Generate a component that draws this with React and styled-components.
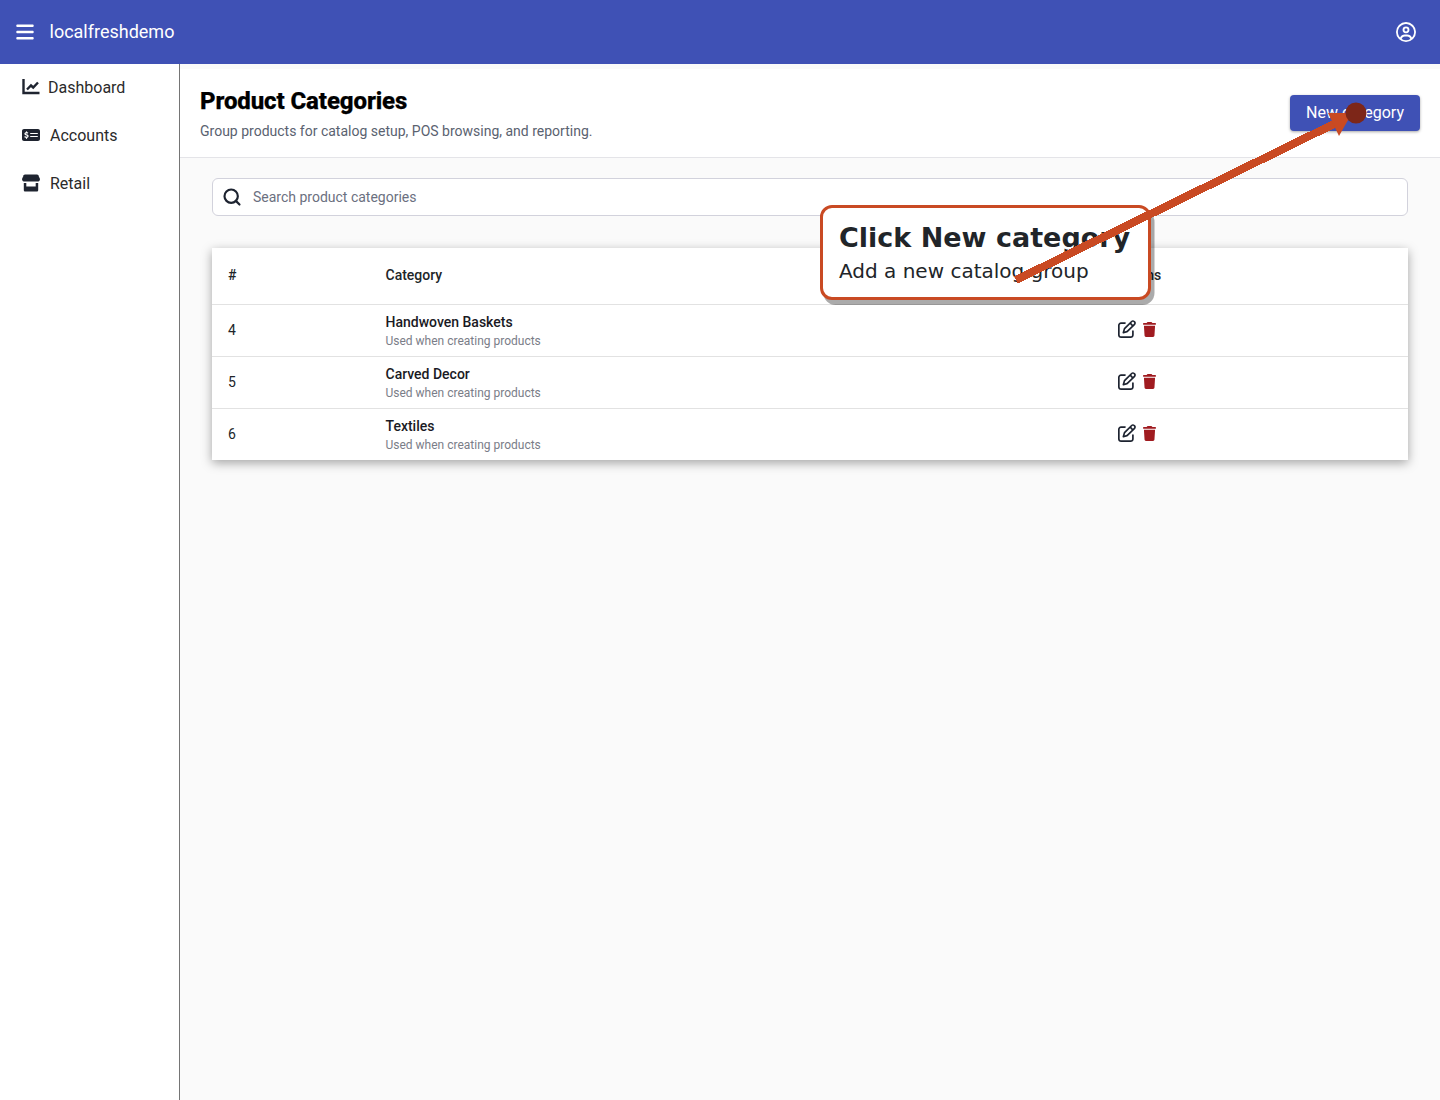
import React from 'react';
import styled, { createGlobalStyle } from 'styled-components';
import { FaBars, FaMoneyCheckDollar, FaRegCircleUser, FaRegPenToSquare, FaTrash } from 'react-icons/fa6';
import { Search } from 'lucide-react';

const GlobalStyle = createGlobalStyle`
  html, body {
    margin: 0;
    padding: 0;
    background: #fafafa;
    font-family: Roboto, "Liberation Sans", sans-serif;
    color: #212529;
  }
  * {
    box-sizing: border-box;
  }
`;

const Page = styled.div`
  position: relative;
  width: 1440px;
  height: 1100px;
  overflow: hidden;
  display: flex;
  flex-direction: column;
`;

const TopBar = styled.header`
  height: 64px;
  flex: none;
  background: #3f51b5;
  color: #fff;
  display: flex;
  align-items: center;
  padding: 0 24px 0 16px;
`;

const MenuButton = styled(FaBars)`
  width: 18px;
  height: 20px;
  margin-right: 15.5px;
`;

const Brand = styled.div`
  font-size: 18px;
  flex: 1;
  padding-bottom: 2px;
`;

const UserIcon = styled(FaRegCircleUser)`
  width: 20px;
  height: 20px;
`;

const Body = styled.div`
  flex: 1;
  display: flex;
  min-height: 0;
`;

const Sidebar = styled.nav`
  width: 180px;
  flex: none;
  background: #fff;
  border-right: 1px solid #757575;
`;

const NavItem = styled.div`
  height: 48px;
  display: flex;
  align-items: center;
  gap: ${(p) => p.$gap}px;
  padding: 0 0 2px 22px;
  font-size: 16px;
  color: #2b2b2b;
  svg {
    flex: none;
    width: 18px;
    height: 18px;
    color: #1f2430;
  }
`;

const Main = styled.main`
  flex: 1;
  min-width: 0;
  padding-top: 5px;
`;

const PageHeader = styled.div`
  height: 89px;
  background: #fff;
  border-bottom: 1px solid #e4e4e8;
  display: flex;
  justify-content: space-between;
  padding: 17px 20px 0;
`;

const Title = styled.h1`
  margin: 0;
  font-size: 24px;
  line-height: 30px;
  font-weight: 800;
  color: #000;
  letter-spacing: -0.1px;
  -webkit-text-stroke: 0.25px #000;
`;

const Subtitle = styled.p`
  margin: 5px 0 0;
  font-size: 14px;
  line-height: 20px;
  color: #5a6270;
`;

const PrimaryButton = styled.button`
  width: 130px;
  height: 36px;
  margin-top: 9px;
  padding: 0 0 2px;
  border: 0;
  border-radius: 4px;
  background: #3f51b5;
  color: #fff;
  font: 16px Roboto, sans-serif;
  box-shadow: 0 1px 3px rgba(0, 0, 0, 0.35);
`;

const Content = styled.div`
  padding: 20px 32px;
`;

const SearchBox = styled.div`
  height: 38px;
  display: flex;
  align-items: center;
  gap: 11px;
  padding-left: 9px;
  background: #fff;
  border: 1px solid #d2d2dc;
  border-radius: 6px;
  svg {
    width: 20px;
    height: 20px;
    color: #1d2330;
  }
`;

const SearchInput = styled.input`
  flex: 1;
  border: 0;
  outline: 0;
  padding: 0;
  background: transparent;
  font: 14px Roboto, sans-serif;
  &::placeholder {
    color: #6b7080;
    opacity: 1;
  }
`;

const Card = styled.section`
  margin-top: 32px;
  background: #fff;
  box-shadow: 0 3px 10px rgba(0, 0, 0, 0.35);
`;

const Row = styled.div`
  display: grid;
  grid-template-columns: 157.5px 728px 1fr;
  align-items: center;
  height: ${(p) => (p.$head ? 57 : p.$last ? 51 : 52)}px;
  padding: 0 0 2px 16px;
  font-size: 14px;
  border-bottom: ${(p) => (p.$last ? 0 : '1px solid #e2e2e2')};
  font-weight: ${(p) => (p.$head ? 500 : 400)};
  color: #212529;
`;

const CategoryCell = styled.div`
  margin-top: 2px;
`;

const Name = styled.div`
  font-weight: 500;
  line-height: 18px;
  color: #1a1a24;
`;

const Hint = styled.div`
  font-size: 12px;
  line-height: 16px;
  margin-top: 2px;
  color: #7a7d88;
`;

const Actions = styled.div`
  display: flex;
  align-items: center;
  gap: 7px;
  padding-left: 4.5px;
`;

const EditIcon = styled(FaRegPenToSquare)`
  width: 18px;
  height: 18px;
  margin-bottom: 2px;
  color: #1d2330;
`;

const TrashIcon = styled(FaTrash)`
  width: 13px;
  height: 15px;
  color: #a01b20;
`;

const Callout = styled.div`
  position: absolute;
  left: 820px;
  top: 205px;
  width: 331px;
  height: 95px;
  padding: 13px 0 0 16px;
  background: #fff;
  border: 3px solid #c94a23;
  border-radius: 12px;
  box-shadow: 3.5px 5px 0 rgba(0, 0, 0, 0.33);
  font-family: "DejaVu Sans", sans-serif;
  color: #212529;
`;

const CalloutTitle = styled.div`
  font-size: 27px;
  line-height: 33px;
  font-weight: 700;
`;

const CalloutText = styled.div`
  margin-top: 4px;
  font-size: 20px;
  line-height: 26px;
`;

const ArrowLayer = styled.svg`
  position: absolute;
  left: 0;
  top: 0;
  pointer-events: none;
`;

const ChartIcon = () => (
  <svg viewBox="0 0 18 18" fill="none" stroke="currentColor" strokeWidth="2.4">
    <path d="M1.5 1v14h16" />
    <path d="M5 11.5l4-4 2.2 2L16 4.5" />
  </svg>
);

const StoreIcon = () => (
  <svg viewBox="0 0 18 18" fill="currentColor">
    <path d="M3 .5h12c.6 0 1 .3 1.3.8L18 5c0 1.6-1 2.6-2.5 2.6h-13C1 7.600 0 6.600 0 5l1.700-3.700C2 .8 2.400.5 3 .5z" />
    <path d="M1.800 9H4.300v3.500h9.400V9h2.500v7c0 1-.6 1.500-1.500 1.500H3.300c-.9 0-1.500-.5-1.500-1.500z" />
  </svg>
);

const rows = [
  { id: 4, name: 'Handwoven Baskets' },
  { id: 5, name: 'Carved Decor' },
  { id: 6, name: 'Textiles' },
];

export default function App() {
  return (
    <Page>
      <GlobalStyle />
      <TopBar>
        <MenuButton />
        <Brand>localfreshdemo</Brand>
        <UserIcon />
      </TopBar>
      <Body>
        <Sidebar>
          <NavItem $gap={8}><ChartIcon />Dashboard</NavItem>
          <NavItem $gap={10}><FaMoneyCheckDollar />Accounts</NavItem>
          <NavItem $gap={10}><StoreIcon />Retail</NavItem>
        </Sidebar>
        <Main>
          <PageHeader>
            <div>
              <Title>Product Categories</Title>
              <Subtitle>Group products for catalog setup, POS browsing, and reporting.</Subtitle>
            </div>
            <PrimaryButton>New category</PrimaryButton>
          </PageHeader>
          <Content>
            <SearchBox>
              <Search strokeWidth={2.6} />
              <SearchInput placeholder="Search product categories" />
            </SearchBox>
            <Card>
              <Row $head>
                <div>#</div>
                <div>Category</div>
                <div>Actions</div>
              </Row>
              {rows.map((row, i) => (
                <Row key={row.id} $last={i === rows.length - 1}>
                  <div>{row.id}</div>
                  <CategoryCell>
                    <Name>{row.name}</Name>
                    <Hint>Used when creating products</Hint>
                  </CategoryCell>
                  <Actions>
                    <EditIcon />
                    <TrashIcon />
                  </Actions>
                </Row>
              ))}
            </Card>
          </Content>
        </Main>
      </Body>
      <Callout>
        <CalloutTitle>Click New category</CalloutTitle>
        <CalloutText>Add a new catalog group</CalloutText>
      </Callout>
      <ArrowLayer width="1440" height="1100" viewBox="0 0 1440 1100">
        <line x1="1016" y1="280" x2="1338" y2="122" stroke="#c94a23" strokeWidth="8" shapeRendering="crispEdges" />
        <polygon points="1328,113 1352,113 1339,136" fill="#c94a23" />
        <circle cx="1356" cy="113" r="10.5" fill="#7d2618" />
      </ArrowLayer>
    </Page>
  );
}
